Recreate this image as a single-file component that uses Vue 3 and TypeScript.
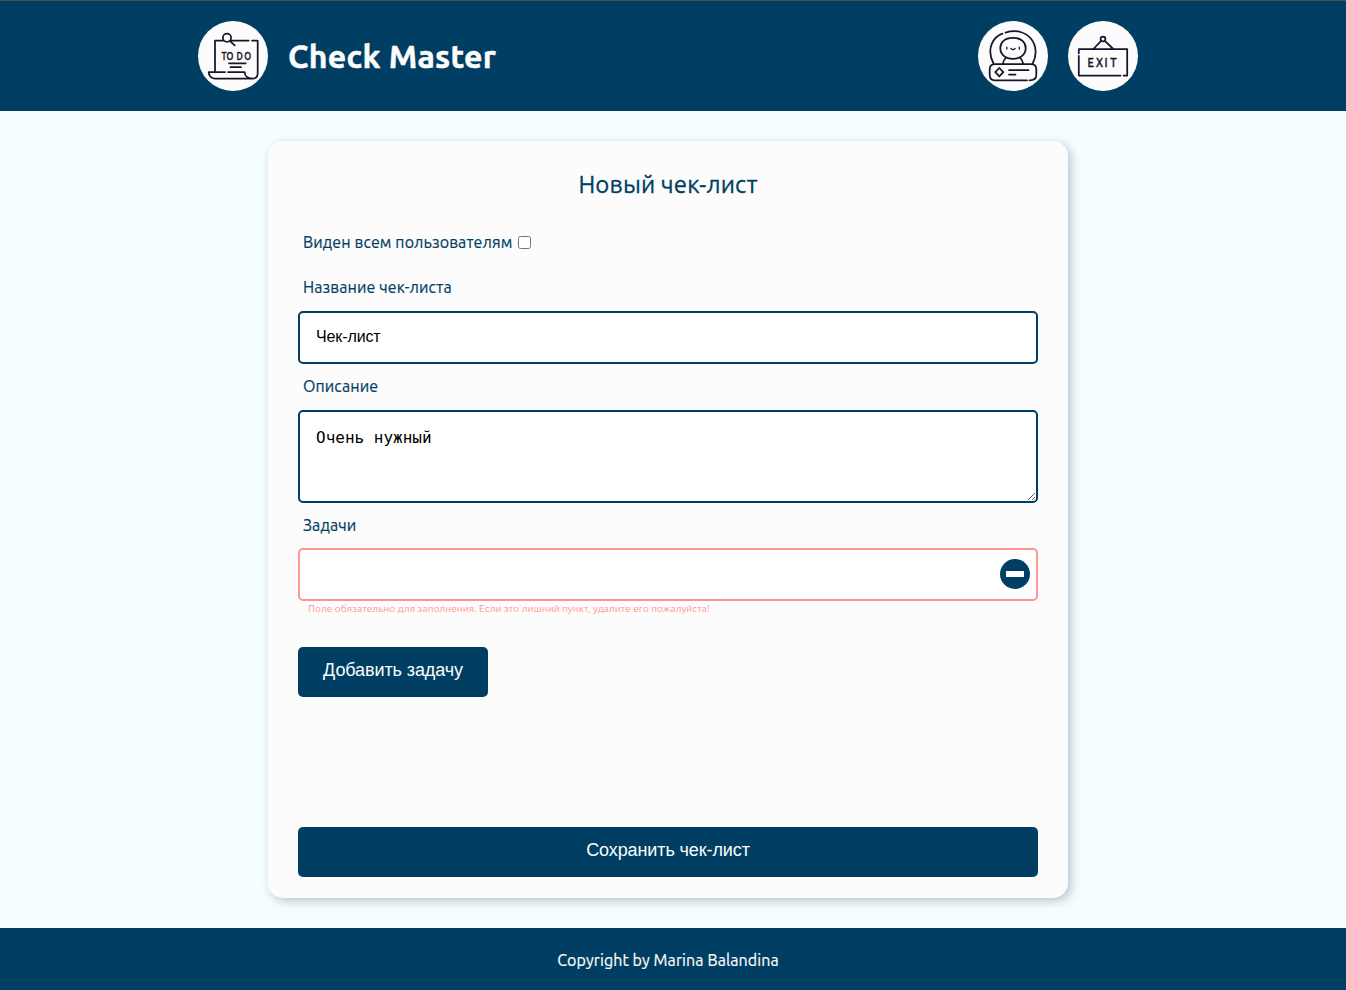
<script setup lang="ts">
import { ref } from 'vue'

const isPublic = ref(false)
const title = ref('Чек-лист')
const description = ref('Очень нужный')
const tasks = ref<string[]>([''])

function addTask(): void {
  tasks.value.push('')
}

function removeTask(index: number): void {
  tasks.value.splice(index, 1)
}
</script>

<template>
  <div class="page">
    <header class="header">
      <div class="header-inner">
        <a class="round">
          <svg viewBox="0 0 70 70" class="icon">
            <circle cx="29" cy="16.7" r="4.1" />
            <path d="M31.8 19.8L36.7 24.4M17 50V19.5H25.5M32 19.5H50.7M54 19.5H59.7V52C59.7 55.5 57.5 57.6 54.5 57.6H17.5C13.5 57.6 10.7 55 10.7 51H27M30 51H46.7C46.7 55 50 57.6 54.5 57.6" />
            <path d="M31 42.3H47.7M32.5 46.2H43" />
            <text x="29.3 35.7 48 57.7" y="39" transform="scale(0.8 1)" class="todo">TODO</text>
          </svg>
        </a>
        <h1 class="brand">Check Master</h1>
        <nav class="nav">
          <a class="round">
            <svg viewBox="0 0 70 70" class="icon">
              <path d="M15.5 42.5C7.5 27 16 15.5 24.4 12.6M27.5 11.6C50 4.5 64 25 54.7 42.5" />
              <path d="M35 16.8C43.5 16.8 47.7 21.5 47.7 27C47.7 33.5 42.5 37.8 35 37.8S22.3 33.5 22.3 27C22.3 21.5 26.5 16.8 35 16.8Z" />
              <path d="M28 36.5C26 38.5 25.3 40.5 24.8 43M42 36.5C44 38.5 44.7 40.5 45.2 43" />
              <path d="M49 59.3H17C13.5 59.3 11.7 57 11.7 54V48.5C11.7 45 13.5 43.2 17 43.2H53C56.5 43.2 58.3 45 58.3 48.5V54C58.3 57 56.5 59.3 51.5 59.3" />
              <path d="M21.3 47L25.3 51.2L21.3 55.4L17.3 51.2ZM31 49H50.5M31 53.5H37.5" />
              <path d="M28.8 26.2V28M41.3 26.2V28M33 27.5Q35 29.8 37 27.5" class="thin" />
            </svg>
          </a>
          <a class="round">
            <svg viewBox="0 0 70 70" class="icon">
              <circle cx="35" cy="18" r="2.4" />
              <path d="M33.2 19.8L25.8 27.5M36.8 19.8L44.8 27.5M10.8 32.3V28H59.2V54.5H55.5M52.5 54.5H10.8V34.8" />
              <text x="23 32.900 43.100 49.800" y="46.200" transform="scale(0.85 1)" class="exit">EXIT</text>
            </svg>
          </a>
        </nav>
      </div>
    </header>

    <main class="main">
      <form class="card" @submit.prevent>
        <h2 class="heading">Новый чек-лист</h2>
        <label class="visible">
          <span class="visible-text">Виден всем пользователям</span>
          <input v-model="isPublic" type="checkbox" class="check" />
        </label>
        <label class="label name-label" for="title">Название чек-листа</label>
        <input id="title" v-model="title" class="field" type="text" />
        <label class="label about-label" for="about">Описание</label>
        <textarea id="about" v-model="description" class="field area" spellcheck="false"></textarea>
        <p class="label tasks-label">Задачи</p>
        <div v-for="(_, i) in tasks" :key="i" class="task">
          <div class="field task-box" :class="{ invalid: !tasks[i] }">
            <input v-model="tasks[i]" class="task-input" type="text" />
            <button type="button" class="remove" @click="removeTask(i)"><i></i></button>
          </div>
          <p class="error"><span v-if="!tasks[i]">Поле обязательно для заполнения. Если это лишний пункт, удалите его пожалуйста!</span></p>
        </div>
        <button type="button" class="button add" @click="addTask">Добавить задачу</button>
        <button type="submit" class="button save">Сохранить чек-лист</button>
      </form>
    </main>

    <footer class="footer">Copyright by Marina Balandina</footer>
  </div>
</template>

<style>
body {
  margin: 0;
}
</style>

<style scoped>
.page {
  display: flex;
  flex-direction: column;
  height: 990px;
  box-sizing: border-box;
  overflow: hidden;
  background: #f4fdff;
  color: #003f63;
  font-family: Ubuntu, "Noto Sans", "Open Sans", sans-serif;
  font-size: 16px;
  letter-spacing: 0.1px;
}
h1, h2, p {
  margin: 0;
}
.header {
  flex: none;
  height: 111px;
  box-sizing: border-box;
  border-top: 1px solid #57474f;
  padding-right: 10px;
  background: #003f63;
}
.header-inner {
  width: 940px;
  height: 110px;
  margin: 0 auto;
  display: flex;
  align-items: center;
}
.round {
  width: 70px;
  height: 70px;
  border-radius: 50%;
  background: #fcfcfc;
}
.icon {
  display: block;
  width: 70px;
  height: 70px;
  fill: none;
  stroke: #17152b;
  stroke-width: 1.75;
  stroke-linecap: round;
  stroke-linejoin: round;
}
.thin {
  stroke-width: 1.3;
}
.icon text {
  fill: #17152b;
  font-family: Ubuntu, "Noto Sans", sans-serif;
  font-weight: 500;
  letter-spacing: 0;
  stroke-width: 0.4;
}
.todo {
  font-size: 11px;
}
.exit {
  font-size: 13px;
}
.brand {
  margin: 0 0 0 20px;
  color: #fcfcfc;
  font-size: 32px;
  line-height: 40px;
  font-weight: 700;
  letter-spacing: 0.3px;
  -webkit-text-stroke: 0.5px;
}
.nav {
  margin-left: auto;
  display: flex;
  gap: 20px;
}
.main {
  flex: 1;
  padding: 30px 10px 30px 0;
}
.card {
  display: flex;
  flex-direction: column;
  width: 800px;
  height: 757px;
  margin: 0 auto;
  padding: 30px 30px 21px;
  box-sizing: border-box;
  border-radius: 15px;
  background: #fcfcfc;
  box-shadow: 3px 3px 10px rgba(0, 40, 60, 0.25);
}
.heading {
  height: 28px;
  line-height: 28px;
  text-align: center;
  font-size: 24px;
  font-weight: 400;
  letter-spacing: 0.18px;
  -webkit-text-stroke: 0.3px;
}
.visible {
  display: flex;
  align-items: center;
  height: 20px;
  margin: 33px 0 0 5px;
}
.visible-text {
  width: 215px;
  white-space: nowrap;
}
.visible-text,
.label,
.footer {
  -webkit-text-stroke: 0.2px;
}
.check {
  width: 13px;
  height: 13px;
  margin: 0;
}
.label {
  margin-left: 5px;
  height: 20px;
  line-height: 20px;
}
.name-label {
  margin-top: 25px;
}
.about-label {
  margin-top: 12px;
}
.tasks-label {
  margin-top: 12px;
}
.field {
  flex: none;
  width: 740px;
  height: 53px;
  margin: 14px 0 0;
  box-sizing: border-box;
  padding: 0 16px 2px;
  border: 2px solid #003f63;
  border-radius: 5px;
  background: #fff;
  color: #000;
  font-family: "Liberation Sans", Arial, sans-serif;
  font-size: 16px;
  letter-spacing: -0.12px;
  outline: none;
}
.area {
  height: 93px;
  padding: 16px;
  line-height: 20px;
  font-family: "DejaVu Sans Mono", monospace;
  letter-spacing: 0;
  resize: vertical;
}
.task-box {
  display: flex;
  align-items: center;
  margin-top: 13px;
  padding: 0 6px 2px 16px;
}
.invalid {
  border-color: #ff9491;
}
.task-input {
  flex: 1;
  border: 0;
  outline: none;
  background: none;
  font-size: 16px;
}
.remove {
  display: flex;
  align-items: center;
  justify-content: center;
  width: 30px;
  height: 30px;
  padding: 0;
  border: 0;
  border-radius: 50%;
  background: #003f63;
}
.remove i {
  width: 18px;
  height: 6px;
  background: #fcfcfc;
}
.error {
  height: 16px;
  margin-left: 10px;
  line-height: 16px;
  font-size: 10px;
  letter-spacing: 0.075px;
  color: #ff9491;
}
.button {
  flex: none;
  height: 50px;
  border: 0;
  border-radius: 5px;
  background: #003f63;
  color: #fcfcfc;
  font-family: "Liberation Sans", Arial, sans-serif;
  font-size: 18px;
  letter-spacing: -0.1px;
  padding: 0 0 4px;
}
.add {
  width: 190px;
  margin-top: 30px;
}
.save {
  width: 740px;
  margin-top: auto;
}
.footer {
  flex: none;
  height: 62px;
  padding-right: 10px;
  line-height: 64px;
  text-align: center;
  background: #003f63;
  color: #fcfcfc;
}
</style>
